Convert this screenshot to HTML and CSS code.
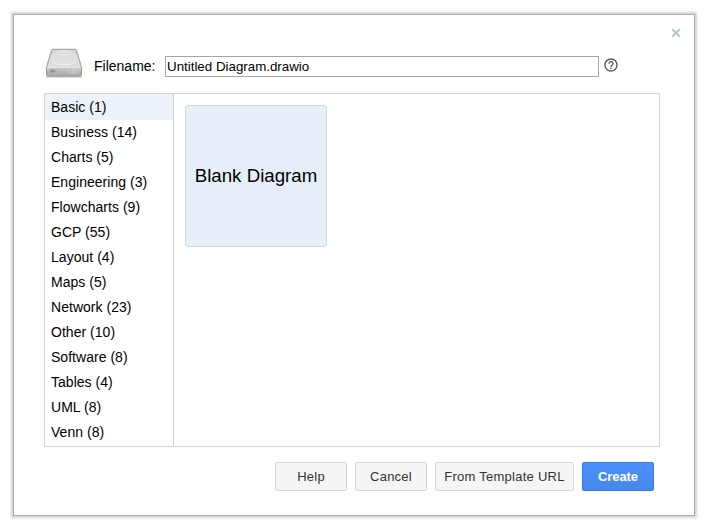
FILE: index.html
```html
<!DOCTYPE html>
<html lang="en">
<head>
<meta charset="utf-8">
<title>New diagram</title>
<link rel="stylesheet" href="styles.css">
</head>
<body>
<main class="dialog">
  <svg class="close" viewBox="0 0 10 10"><path d="M1.200 1.200l7.600 7.600M8.800 1.200l-7.600 7.600"/></svg>
  <header class="file-row">
    <svg class="drive" viewBox="0 0 40 32">
      <defs>
        <linearGradient id="top" x1="0" y1="0" x2="0" y2="1"><stop offset="0" stop-color="#cfcfcf"/><stop offset="1" stop-color="#e6e6e6"/></linearGradient>
        <linearGradient id="front" x1="0" y1="0" x2="0" y2="1"><stop offset="0" stop-color="#c9c9c9"/><stop offset="1" stop-color="#a9a9a9"/></linearGradient>
        <linearGradient id="slot"><stop offset="0" stop-color="#808080"/><stop offset="1" stop-color="#b8b8b8"/></linearGradient>
      </defs>
      <path class="shade" d="M2 29h36"/>
      <path fill="url(#top)" d="M8.900 1.300h22.200q1 0 1.400 1l5 17v7.700q0 1.300-1.300 1.300H3.800Q2.500 28.300 2.500 27v-7.700L7.500 2.300q.4-1 1.400-1z"/>
      <ellipse class="disc" cx="20" cy="9.300" rx="12.500" ry="7"/>
      <path class="disc-edge" d="M6.500 12C8 18.500 32 18.500 33.500 12"/>
      <path fill="url(#front)" d="M3 19.500h34V27q0 1-1 1H4q-1 0-1-1z"/>
      <path class="lip" d="M3.500 19.500h33"/>
      <path class="outline" d="M8.900 1.300h22.200q1 0 1.400 1l5 17v7.700q0 1.300-1.300 1.300H3.800Q2.500 28.300 2.500 27v-7.700L7.500 2.300q.4-1 1.400-1z"/>
      <rect x="6.500" y="21.500" width="6.500" height="3" rx="1" fill="url(#slot)"/>
      <path class="vents" d="M24.500 21v5M26.500 21v5M28.500 21v5M30.500 21v5M32.500 21v5"/>
    </svg>
    <label class="label" for="filename">Filename:</label>
    <input class="filename" id="filename" value="Untitled Diagram.drawio">
    <svg class="help" viewBox="0 0 24 24"><path d="M11 18h2v-2h-2v2zm1-16C6.480 2 2 6.480 2 12s4.480 10 10 10 10-4.480 10-10S17.520 2 12 2zm0 18c-4.410 0-8-3.590-8-8s3.590-8 8-8 8 3.590 8 8-3.590 8-8 8zm0-14c-2.210 0-4 1.790-4 4h2c0-1.100.9-2 2-2s2 .9 2 2c0 2-3 1.750-3 5h2c0-2.250 3-2.500 3-5 0-2.210-1.790-4-4-4z"/></svg>
  </header>
  <section class="templates">
    <ul class="categories">
      <li class="selected">Basic (1)</li>
      <li>Business (14)</li>
      <li>Charts (5)</li>
      <li>Engineering (3)</li>
      <li>Flowcharts (9)</li>
      <li>GCP (55)</li>
      <li>Layout (4)</li>
      <li>Maps (5)</li>
      <li>Network (23)</li>
      <li>Other (10)</li>
      <li>Software (8)</li>
      <li>Tables (4)</li>
      <li>UML (8)</li>
      <li>Venn (8)</li>
    </ul>
    <div class="gallery"><div class="tile">Blank Diagram</div></div>
  </section>
  <footer class="actions">
    <button class="btn">Help</button>
    <button class="btn">Cancel</button>
    <button class="btn wide">From Template URL</button>
    <button class="btn primary">Create</button>
  </footer>
</main>
</body>
</html>
```
FILE: styles.css
```css
* { box-sizing: border-box; }
body {
  margin: 0;
  padding: 14px 13px;
  background: #fff;
  color: #000;
  font-family: "Liberation Sans", Arial, sans-serif;
  font-size: 14px;
}
.dialog {
  position: relative;
  width: 682px;
  height: 502px;
  padding: 30px;
  border: 1px solid #acacac;
  background: #fff;
  box-shadow: 0 0 2px 2px #d5d5d5;
}
.close {
  position: absolute;
  top: 13px;
  right: 13px;
  width: 10px;
  height: 10px;
  fill: none;
  stroke: #b3c5d8;
  stroke-width: 2.200;
}
.file-row { display: flex; height: 48px; }
.drive { width: 40px; height: 32px; margin-top: 3px; flex: none; }
.shade { stroke: #bbb; stroke-width: 1.500; opacity: .6; }
.disc { fill: #dedede; stroke: #e9e9e9; stroke-width: .6; }
.disc-edge { fill: none; stroke: #f3f3f3; stroke-width: .8; }
.lip { stroke: #eee; stroke-width: .8; }
.outline { fill: none; stroke: #929292; stroke-width: .9; }
.vents { stroke: #d0d0d0; stroke-width: .8; }
.label { width: 71px; margin-left: 10px; line-height: 16px; padding-top: 13px; flex: none; }
.filename {
  width: 434px;
  height: 21px;
  margin-top: 11px;
  padding: 0 1px;
  border: 1px solid #a6a6a6;
  border-radius: 0;
  outline: none;
  font: 13.333px "Liberation Sans", Arial, sans-serif;
}
.help { width: 16px; height: 16px; margin: 12px 0 0 4px; fill: #555; }
.templates { display: flex; width: 616px; height: 354px; border: 1px solid #d3d3d3; }
.categories {
  width: 129px;
  margin: 0;
  padding: 0;
  list-style: none;
  border-right: 1px solid #d3d3d3;
  flex: none;
  letter-spacing: .03px;
}
.categories li { height: 25px; padding-left: 6px; line-height: 26px; }
.categories .selected { height: 26px; margin-bottom: -1px; background: #ebf2f9; }
.gallery { flex: 1; padding: 11px; }
.tile {
  display: flex;
  align-items: center;
  justify-content: center;
  width: 142px;
  height: 142px;
  border: 1px solid #ccd9ea;
  border-radius: 3px;
  background: #e6eef8;
  font-size: 18.700px;
}
.actions { display: flex; justify-content: flex-end; gap: 8px; padding: 15px 10px 0 0; }
.btn {
  width: 72px;
  height: 29px;
  padding: 0;
  border: 1px solid #d8d8d8;
  border-radius: 2px;
  background: #f5f5f5;
  color: #333;
  font: 13px "Liberation Sans", Arial, sans-serif;
  letter-spacing: .25px;
}
.wide { width: 139px; }
.primary {
  border-color: #3079ed;
  background: linear-gradient(#4d90fe, #4787ed);
  color: #fff;
  font-weight: bold;
  letter-spacing: -.1px;
}
```
